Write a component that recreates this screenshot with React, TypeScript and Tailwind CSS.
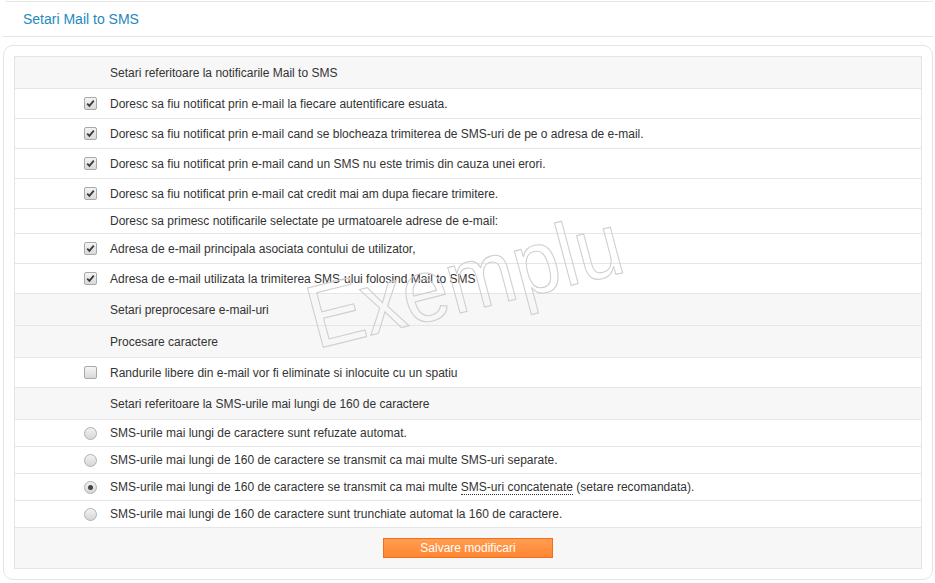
import React from "react"

type Row =
  | { kind: "section"; text: string; h: string }
  | { kind: "check"; text: string; checked: boolean; h: string }
  | { kind: "plain"; text: string; h: string }
  | { kind: "radio"; text: React.ReactNode; checked: boolean; h: string }

const rows: Row[] = [
  { kind: "section", text: "Setari referitoare la notificarile Mail to SMS", h: "h-[32px]" },
  { kind: "check", text: "Doresc sa fiu notificat prin e-mail la fiecare autentificare esuata.", checked: true, h: "h-[30px]" },
  { kind: "check", text: "Doresc sa fiu notificat prin e-mail cand se blocheaza trimiterea de SMS-uri de pe o adresa de e-mail.", checked: true, h: "h-[30px]" },
  { kind: "check", text: "Doresc sa fiu notificat prin e-mail cand un SMS nu este trimis din cauza unei erori.", checked: true, h: "h-[30px]" },
  { kind: "check", text: "Doresc sa fiu notificat prin e-mail cat credit mai am dupa fiecare trimitere.", checked: true, h: "h-[30px]" },
  { kind: "plain", text: "Doresc sa primesc notificarile selectate pe urmatoarele adrese de e-mail:", h: "h-[25px]" },
  { kind: "check", text: "Adresa de e-mail principala asociata contului de utilizator,", checked: true, h: "h-[30px]" },
  { kind: "check", text: "Adresa de e-mail utilizata la trimiterea SMS-ului folosind Mail to SMS", checked: true, h: "h-[30px]" },
  { kind: "section", text: "Setari preprocesare e-mail-uri", h: "h-[32px]" },
  { kind: "section", text: "Procesare caractere", h: "h-[32px]" },
  { kind: "check", text: "Randurile libere din e-mail vor fi eliminate si inlocuite cu un spatiu", checked: false, h: "h-[30px]" },
  { kind: "section", text: "Setari referitoare la SMS-urile mai lungi de 160 de caractere", h: "h-[32px]" },
  { kind: "radio", text: "SMS-urile mai lungi de caractere sunt refuzate automat.", checked: false, h: "h-[27px]" },
  { kind: "radio", text: "SMS-urile mai lungi de 160 de caractere se transmit ca mai multe SMS-uri separate.", checked: false, h: "h-[27px]" },
  {
    kind: "radio",
    text: (
      <>
        SMS-urile mai lungi de 160 de caractere se transmit ca mai multe{" "}
        <span className="border-b border-dotted border-[#333]">SMS-uri concatenate</span> (setare recomandata).
      </>
    ),
    checked: true,
    h: "h-[27px]",
  },
  { kind: "radio", text: "SMS-urile mai lungi de 160 de caractere sunt trunchiate automat la 160 de caractere.", checked: false, h: "h-[27px]" },
]

function Checkbox({ checked }: { checked: boolean }) {
  return (
    <span className="flex h-[13px] w-[13px] items-center justify-center rounded-[2px] border border-[#a9a9a9] bg-gradient-to-b from-[#f4f4f4] to-[#d9d9d9]">
      {checked && (
        <svg width="9" height="9" viewBox="0 0 9 9">
          <path d="M1.2 4.6 L3.4 6.8 L7.8 1.6" fill="none" stroke="#3a3a3a" strokeWidth="1.8" />
        </svg>
      )}
    </span>
  )
}

function Radio({ checked }: { checked: boolean }) {
  return (
    <span className="flex h-[13px] w-[13px] items-center justify-center rounded-full border border-[#b0b0b0] bg-gradient-to-b from-[#f2f2f2] to-[#d6d6d6]">
      {checked && <span className="h-[5px] w-[5px] rounded-full bg-[#444]" />}
    </span>
  )
}

export default function App() {
  return (
    <div className="h-[583px] w-[935px] overflow-hidden bg-white font-['Liberation_Sans',Arial,sans-serif] text-[12px] text-[#333]">
      <div className="ml-[5px] mr-[2px] h-[2px] rounded-b-[6px] border-x border-b border-[#e8e8e8]" />

      <div className="ml-[3px] mr-[2px] flex h-[35px] items-center border-b border-[#e6e6e6] pl-[20px] text-[14px] text-[#2489bd]">
        Setari Mail to SMS
      </div>

      <div className="relative ml-[3px] mr-[2px] mt-[8px] rounded-[10px] border border-[#e4e4e4] p-[10px]">
        <div className="border-x border-t border-[#e4e4e4]">
          {rows.map((row, i) => {
            const gray = row.kind === "section"
            return (
              <div
                key={i}
                className={`flex items-center border-b border-[#e6e6e6] ${row.h} ${gray ? "bg-[#f7f7f7]" : "bg-white"}`}
              >
                <div className="flex w-[95px] shrink-0 pl-[69px]">
                  {row.kind === "check" && <Checkbox checked={row.checked} />}
                  {row.kind === "radio" && <Radio checked={row.checked} />}
                </div>
                <div className="whitespace-nowrap">{row.text}</div>
              </div>
            )
          })}
          <div className="flex h-[41px] items-center justify-center border-b border-[#e6e6e6] bg-[#f7f7f7]">
            <button className="h-[20px] w-[170px] border border-[#f26f1a] bg-gradient-to-b from-[#ff9e4f] to-[#ff8532] text-[12px] text-white">
              Salvare modificari
            </button>
          </div>
        </div>

        {/* watermark */}
        <span className="pointer-events-none absolute left-[313px] top-[236px] origin-[0_68px] select-none whitespace-nowrap text-[80px] leading-none text-transparent [-webkit-text-stroke:1px_#cfcfcf] [transform:skewY(-14deg)_skewX(14deg)_scaleY(1.15)]">
          Exemplu
        </span>
      </div>
    </div>
  )
}
